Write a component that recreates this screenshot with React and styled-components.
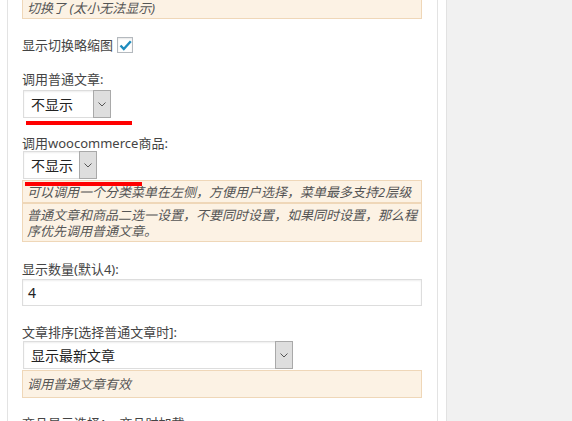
import React from "react";
import styled, { createGlobalStyle } from "styled-components";

const GlobalStyle = createGlobalStyle`
  html, body {
    margin: 0;
    padding: 0;
    background: #fff;
    overflow: hidden;
  }
  body {
    font-family: "Noto Sans", "Noto Sans CJK SC", sans-serif;
    color: #444;
  }
`;

const Page = styled.div`
  display: flex;
  height: 421px;
  overflow: hidden;
`;

const Panel = styled.div`
  box-sizing: border-box;
  width: 431px;
  margin-left: 7px;
  border-left: 1px solid #e3e3e3;
  border-right: 1px solid #e3e3e3;
  padding: 0 15px 0 14px;
  display: flex;
  flex-direction: column;
`;

const Sidebar = styled.div`
  flex: 1;
  margin-left: 8px;
  border-left: 1px solid #e2e2e2;
  background: #f1f1f1;
`;

const Notice = styled.div`
  box-sizing: border-box;
  margin-top: ${(p) => p.$mt || 0}px;
  padding: ${(p) => (p.$roomy ? "5px 2px 5px 4px" : "3px 2px 2px 4px")};
  background: #fcf2e4;
  border: 1px solid #efd7b8;
  font-size: 13px;
  line-height: 16px;
  font-style: italic;
  color: #555;
`;

const Label = styled.div`
  margin-top: ${(p) => p.$mt || 0}px;
  font-size: 13px;
  line-height: 16px;
  color: #444;
  white-space: nowrap;
`;

const CheckRow = styled.label`
  display: flex;
  align-items: center;
  height: 16px;
  margin-top: ${(p) => p.$mt || 0}px;
  font-size: 13px;
  line-height: 16px;
`;

const CheckBox = styled.span`
  box-sizing: border-box;
  width: 16px;
  height: 16px;
  margin-left: 4px;
  border: 1px solid #b4b9be;
  background: #fff;
  box-shadow: inset 0 1px 2px rgba(0, 0, 0, 0.1);
  display: flex;
  align-items: center;
  justify-content: center;
`;

const Field = styled.div`
  position: relative;
  margin-top: ${(p) => p.$mt || 0}px;
`;

const Select = styled.div`
  box-sizing: border-box;
  display: flex;
  align-items: center;
  width: ${(p) => p.$w}px;
  height: 28px;
  margin-left: 1px;
  border: 1px solid #ddd;
  background: #fff;
  box-shadow: inset 0 1px 2px rgba(0, 0, 0, 0.07);
  font-size: 14px;
  color: #222;
`;

const Value = styled.span`
  flex: 1;
  padding-left: 7px;
  white-space: nowrap;
`;

const Arrow = styled.span`
  box-sizing: border-box;
  align-self: stretch;
  width: 18px;
  margin: -1px -1px -1px 0;
  background: #dedede;
  border: 1px solid #a9a9a9;
  display: flex;
  align-items: center;
  justify-content: center;
`;

const Input = styled.div`
  box-sizing: border-box;
  height: 27px;
  margin-top: ${(p) => p.$mt || 0}px;
  padding-left: 5px;
  border: 1px solid #ddd;
  background: #fff;
  box-shadow: inset 0 1px 2px rgba(0, 0, 0, 0.07);
  font-size: 14px;
  line-height: 25px;
  color: #222;
`;

const Mark = styled.div`
  position: absolute;
  top: 31px;
  left: ${(p) => p.$left}px;
  width: ${(p) => p.$w}px;
  height: 4px;
  background: #ff0000;
  z-index: 2;
`;

const Chevron = () => (
  <svg width="8" height="5" viewBox="0 0 8 5">
    <path d="M0.5 0.5 L4 4 L7.5 0.5" fill="none" stroke="#555" strokeWidth="1" />
  </svg>
);

const Dropdown = ({ w, children }) => (
  <Select $w={w}>
    <Value>{children}</Value>
    <Arrow>
      <Chevron />
    </Arrow>
  </Select>
);

export default function App() {
  return (
    <>
      <GlobalStyle />
      <Page>
        <Panel>
          <Notice $mt={-4}>切换了 (太小无法显示)</Notice>

          <CheckRow $mt={18}>
            显示切换略缩图
            <CheckBox>
              <svg width="13" height="11" viewBox="0 0 13 11">
                <path d="M1.5 5.5 L4.8 9 L11.8 1.2" fill="none" stroke="#1e8cbe" strokeWidth="2.4" />
              </svg>
            </CheckBox>
          </CheckRow>

          <Label $mt={18}>调用普通文章:</Label>
          <Field $mt={3}>
            <Dropdown w={88}>不显示</Dropdown>
            <Mark $left={4} $w={106} />
          </Field>

          <Label $mt={17}>调用woocommerce商品:</Label>
          <Field>
            <Dropdown w={74}>不显示</Dropdown>
            <Mark $left={3} $w={117} />
          </Field>

          <Notice $mt={1}>可以调用一个分类菜单在左侧，方便用户选择，菜单最多支持2层级</Notice>
          <Notice>普通文章和商品二选一设置，不要同时设置，如果同时设置，那么程序优先调用普通文章。</Notice>

          <Label $mt={19}>显示数量(默认4):</Label>
          <Input $mt={2}>4</Input>

          <Label $mt={18}>文章排序[选择普通文章时]:</Label>
          <Field $mt={1}>
            <Dropdown w={270}>显示最新文章</Dropdown>
          </Field>
          <Notice $mt={1} $roomy>调用普通文章有效</Notice>

          <Label $mt={17}>商品显示选择：　商品时加载</Label>
        </Panel>
        <Sidebar />
      </Page>
    </>
  );
}
